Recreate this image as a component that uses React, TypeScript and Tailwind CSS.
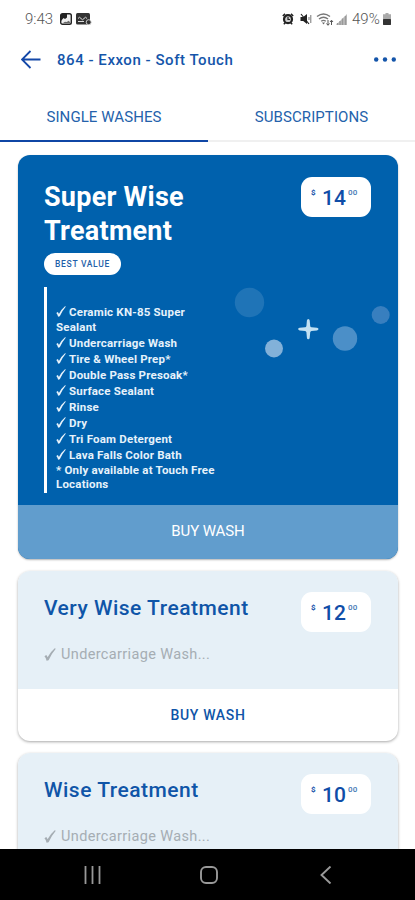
type PriceTagProps = {
  dollars: number;
};

type WashCardProps = {
  title: string;
  price: number;
  summary: string;
  showAction?: boolean;
};

const features = [
  "Ceramic KN-85 Super Sealant",
  "Undercarriage Wash",
  "Tire & Wheel Prep*",
  "Double Pass Presoak*",
  "Surface Sealant",
  "Rinse",
  "Dry",
  "Tri Foam Detergent",
  "Lava Falls Color Bath",
];

function CheckMark({ className }: { className: string }) {
  return (
    <svg className={className} viewBox="0 0 10 11" fill="currentColor">
      <path d="M0.300 6.900L1.800 5.900Q2.600 6.700 2.900 7.900Q5.200 3.400 9 0.200L9.900 0.600Q6.300 4.800 3.800 10.300L2.100 10.800Q1.500 8 0.300 6.900z" />
    </svg>
  );
}

function StatusBar() {
  return (
    <div className="flex h-[38px] shrink-0 items-center justify-between pl-[25px] pr-[24px] text-[#555]">
      <div className="flex items-center">
        <span className="w-[29px] text-[15px] font-light leading-none">9:43</span>
        {/* gallery */}
        <svg className="ml-[6px] h-3 w-3" viewBox="0 0 12 12">
          <rect x="0.700" y="0.700" width="10.600" height="10.600" rx="1.800" fill="#eee" stroke="#222" strokeWidth="1.400" />
          <path d="M1 1h6v3.500L5 6 3.500 5 1 8z" fill="#222" />
          <path d="M3 10l2-1.300 1.600.3 2.300-1.300 1.500 2.300z" fill="#666" />
        </svg>
        {/* voicemail card */}
        <svg className="ml-1 h-3 w-4" viewBox="0 0 16 12">
          <rect width="14" height="11.500" rx="1.500" fill="#333" />
          <path d="M2 5.500q1.500-2.500 3 0t3 0 3 0M2 8.500h6" fill="none" stroke="#ddd" strokeWidth="1" />
          <circle cx="12.700" cy="9.200" r="2.500" fill="#333" stroke="#eee" strokeWidth="0.800" />
        </svg>
      </div>

      <div className="flex items-center">
        {/* alarm */}
        <svg className="h-3 w-3" viewBox="0 0 12 12">
          <path d="M0.800 3L3 0.900M11.200 3L9 0.900M1.800 11.200l1.700-1.700M10.200 11.200L8.500 9.500" stroke="#222" strokeWidth="1.500" />
          <circle cx="6" cy="6.200" r="4" fill="#ccc" stroke="#222" strokeWidth="2.200" />
          <path d="M6 4v2.500h2" fill="none" stroke="#222" strokeWidth="1.200" />
        </svg>
        {/* muted speaker */}
        <svg className="ml-[6px] h-3 w-3" viewBox="0 0 12 12">
          <path d="M0.500 4h2.700L7 1v10L3.200 8H0.500z" fill="#222" />
          <path d="M1 1l8 10" stroke="#222" strokeWidth="1.200" />
          <path d="M9 4v3M10.800 2v8" stroke="#777" strokeWidth="1" />
        </svg>
        {/* wifi */}
        <svg className="ml-[4px] h-[13px] w-[18px]" viewBox="0 0 18 13">
          <path d="M1 3.500q6.500-5 13 0M3 6q4.500-3.500 9 0M5.200 8.300q2.300-1.800 4.600 0" fill="none" stroke="#777" strokeWidth="1.400" />
          <path d="M6 9.500h3l-1.500 2z" fill="#666" />
          <path d="M12 7v5M10.500 10.500L12 12.300l1.500-1.800M15.500 12V7.500M14 9l1.500-1.800L17 9" fill="none" stroke="#555" strokeWidth="1" />
        </svg>
        {/* signal */}
        <svg className="ml-[2px] h-3 w-[11px]" viewBox="0 0 11 12">
          <path d="M0 12l11-11v11z" fill="#bbb" />
          <path d="M1.500 12v-2M4 12V8M6.500 12V5.500M9.500 12V3" stroke="#999" strokeWidth="1.300" />
        </svg>
        <span className="ml-[5px] w-[29px] whitespace-nowrap text-[15px] font-light leading-none">
          49%
        </span>
        {/* battery */}
        <svg className="ml-[2px] h-3 w-2" viewBox="0 0 8 12">
          <path d="M2.500 0h3v1.200H8V12H0V1.200h2.500z" fill="#aaa" />
          <rect y="6" width="8" height="6" rx="0.800" fill="#333" />
        </svg>
      </div>
    </div>
  );
}

function PriceTag({ dollars }: PriceTagProps) {
  return (
    <div className="flex h-10 w-[70px] shrink-0 items-start rounded-[11px] bg-white pl-[10px] text-[#0f4da8]">
      <span className="mt-[11px] w-[11px] text-[8px] font-bold leading-[10px]">$</span>
      <span className="mt-[9px] w-[26px] text-[21px] font-medium leading-[25px]">
        {dollars}
      </span>
      <span className="mt-[11px] text-[8px] font-medium leading-[10px] tracking-[0.200px] text-[#4577b5]">00</span>
    </div>
  );
}

function FeaturedCard() {
  return (
    <section className="relative shrink-0 overflow-hidden rounded-[12px] bg-[#0061ad] shadow-[0_1px_2px_rgba(0,0,0,0.3)]">
      {/* bubbles and sparkle over the card */}
      <svg className="absolute left-[215px] top-[130px] h-[80px] w-[160px]" viewBox="0 0 160 80">
        <circle cx="16.500" cy="17.500" r="14.700" fill="#1f74b7" />
        <circle cx="41" cy="63.500" r="9" fill="#82b1d9" />
        <circle cx="112" cy="53.500" r="12.200" fill="#4b8fc8" />
        <circle cx="147.700" cy="30" r="9" fill="#387fbf" />
        <path
          d="M75.300 34q1.200 0 1.400 1.500l.5 5.400q.2 1.100 1.300 1.300l5.500.6q1.500.3 1.500 1.300t-1.500 1.300l-5.500.6q-1.100.2-1.300 1.300l-.5 5.400q-.2 1.500-1.400 1.500t-1.400-1.500l-.5-5.400q-.2-1.100-1.300-1.300l-5.500-.6q-1.500-.3-1.500-1.300t1.500-1.300l5.500-.6q1.100-.2 1.300-1.300l.5-5.400q.2-1.500 1.400-1.500z"
          fill="#c2e1f3"
        />
      </svg>

      <div className="h-[350px] pl-[26px] pr-[27px] pt-[22px]">
        <div className="flex justify-between">
          <h2 className="w-[170px] pt-[3px] text-[27px] font-bold leading-[34px] tracking-[0.250px] text-white">
            Super Wise Treatment
          </h2>
          <PriceTag dollars={14} />
        </div>

        <span className="mt-[5px] flex h-[22px] w-[77px] items-center justify-center rounded-full bg-white pt-px text-[8.500px] font-medium tracking-[0.700px] text-[#1f5fa9]">
          BEST VALUE
        </span>

        <div className="mt-[12px] h-[206px] w-[190px] border-l-[3px] border-white pl-[9px] pt-[18px] text-[11.500px] font-bold leading-[14.500px] tracking-[0.200px] text-[#e6f2fb]">
          <ul className="w-[150px]">
            {features.map((feature) => (
              <li key={feature} className="mb-[1.600px] last:mb-0">
                <CheckMark className="mr-[3px] inline-block h-[11px] w-[10px] align-[-1px]" />
                {feature}
              </li>
            ))}
          </ul>
          <p>* Only available at Touch Free Locations</p>
        </div>
      </div>

      <button
        type="button"
        className="flex h-[54px] w-full items-center justify-center bg-[#619dcd] pb-[2px] text-[15px] tracking-[-0.100px] text-white"
      >
        BUY WASH
      </button>
    </section>
  );
}

function WashCard({ title, price, summary, showAction = true }: WashCardProps) {
  return (
    <section className="shrink-0 overflow-hidden rounded-[12px] bg-white shadow-[0_1px_3px_rgba(0,0,0,0.35)]">
      <div className="h-[118px] bg-[#e6f0f7] pl-[26px] pr-[27px] pt-[21px]">
        <div className="flex justify-between">
          <h2 className="pt-px text-[21px] font-medium leading-[30px] tracking-[0.500px] text-[#0f55a8]">
            {title}
          </h2>
          <PriceTag dollars={price} />
        </div>
        <p className="mt-[13px] text-[14.500px] leading-5 tracking-[0.360px] text-[#a5adb3]">
          <CheckMark className="mr-[5px] inline-block h-[13px] w-[12px] align-[-2px]" />
          {summary}
        </p>
      </div>
      {showAction && (
        <button
          type="button"
          className="flex h-[52px] w-full items-center justify-center pt-px text-[14px] font-medium tracking-[0.680px] text-[#0f55a8]"
        >
          BUY WASH
        </button>
      )}
    </section>
  );
}

export default function App() {
  return (
    <div className="flex h-[900px] w-[415px] flex-col overflow-hidden bg-white font-[Roboto,sans-serif]">
      <StatusBar />

      {/* HEADER */}
      <header className="flex h-[43px] shrink-0 items-center pl-[21px] pr-[18px] text-[#1455aa]">
        <svg className="h-5 w-5" viewBox="0 0 20 20" fill="none" stroke="#1448a8" strokeWidth="1.800">
          <path d="M19.500 9.500H1M9.500 1L1 9.500l8.500 8.500" />
        </svg>
        <h1 className="ml-[16px] pt-[2px] text-[15px] font-medium tracking-[0.540px]">
          864 - Exxon - Soft Touch
        </h1>
        <svg className="ml-auto h-[5px] w-6" viewBox="0 0 24 5" fill="#1455aa">
          <circle cx="3.200" cy="2.500" r="2.200" />
          <circle cx="12" cy="2.500" r="2.200" />
          <circle cx="20.800" cy="2.500" r="2.200" />
        </svg>
      </header>

      {/* TABS */}
      <nav className="flex h-[61px] shrink-0 text-[15px] tracking-[0.080px] text-[#2462ab]">
        <button type="button" className="w-[208px] border-b-2 border-[#0f46a5] pb-[9px] pt-[22px]">
          SINGLE WASHES
        </button>
        <button type="button" className="flex-1 border-b-2 border-[#f0f0f0] pb-[9px] pt-[22px]">
          SUBSCRIPTIONS
        </button>
      </nav>

      {/* WASH LIST */}
      <main className="flex min-h-0 flex-1 flex-col gap-3 overflow-hidden pl-[18px] pr-[17px] pt-[13px]">
        <FeaturedCard />
        <WashCard title="Very Wise Treatment" price={12} summary="Undercarriage Wash..." />
        <WashCard title="Wise Treatment" price={10} summary="Undercarriage Wash..." showAction={false} />
      </main>

      {/* SYSTEM NAVIGATION */}
      <footer className="flex h-[51px] shrink-0 items-center bg-black pl-[84px]">
        <svg className="h-[18px] w-[17px]" viewBox="0 0 17 18" stroke="#999" strokeWidth="1.800">
          <path d="M1.500 0v18M8.500 0v18M15.500 0v18" />
        </svg>
        <svg className="ml-[99px] h-[18px] w-[18px]" viewBox="0 0 18 18">
          <rect x="1" y="1" width="16" height="16" rx="5" fill="none" stroke="#999" strokeWidth="1.900" />
        </svg>
        <svg className="ml-[102px] h-[18px] w-[12px]" viewBox="0 0 12 18">
          <path d="M10.500 0.500L1.500 9l9 8.500" fill="none" stroke="#999" strokeWidth="1.900" />
        </svg>
      </footer>
    </div>
  );
}
